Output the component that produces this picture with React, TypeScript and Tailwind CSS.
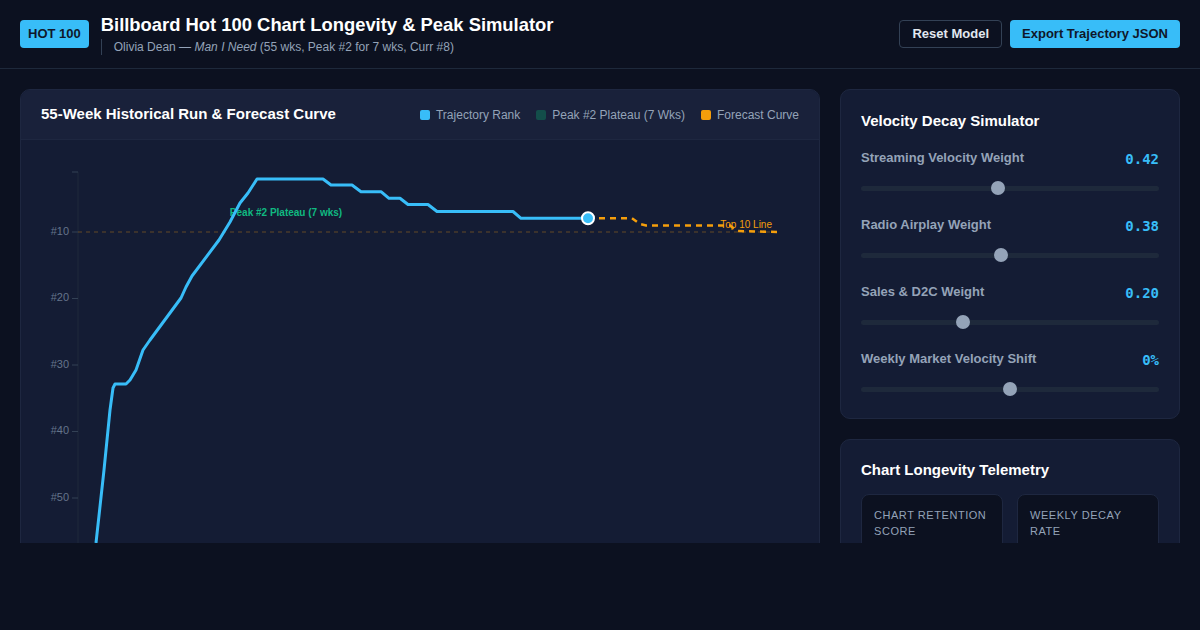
import React from "react";

const trajectory: [number, number][] = [
  [93, 560], [96, 543], [104, 470], [110, 410], [113, 388], [115, 384], [126, 384],
  [130, 380], [136, 370], [143, 350], [150, 340], [181, 298], [186, 287], [192, 276],
  [219, 240], [230, 222], [240, 203], [248, 193], [257, 179], [323, 179], [331, 185],
  [352, 185], [361, 191.7], [381, 191.7], [389, 198.3], [400, 198.3], [408, 204.5],
  [428, 204.5], [437, 211.5], [513, 211.5], [521, 218.3], [588, 218.3],
];

const forecast: [number, number][] = [
  [588, 218.3], [632, 218.3], [640, 224], [646, 225.4], [730, 225.4], [737, 231], [777, 232],
];

const ranks = [
  { label: "#10", y: 232 },
  { label: "#20", y: 298.5 },
  { label: "#30", y: 365 },
  { label: "#40", y: 431.5 },
  { label: "#50", y: 498 },
];

const sliders = [
  { label: "Streaming Velocity Weight", value: "0.42", pos: 137 },
  { label: "Radio Airplay Weight", value: "0.38", pos: 140 },
  { label: "Sales & D2C Weight", value: "0.20", pos: 102 },
  { label: "Weekly Market Velocity Shift", value: "0%", pos: 149 },
];

const pts = (p: [number, number][]) => p.map(([x, y]) => `${x},${y}`).join(" ");

const Legend = ({ color, label }: { color: string; label: string }) => (
  <div className="flex items-center gap-1.5">
    <span className={`w-2.5 h-2.5 rounded-[2px] ${color}`}></span>
    <span className="text-[12px] text-[#94a3b8]">{label}</span>
  </div>
);

const TrajectoryChart = () => {
  return (
    <svg
      width="798"
      height="420"
      viewBox="21 140 798 420"
      className="block"
      fontFamily="'Liberation Sans', Arial, sans-serif"
    >
      <line x1="78" y1="172" x2="78" y2="560" stroke="#1e293b" strokeWidth="1" />
      <line x1="72" y1="172" x2="78" y2="172" stroke="#334155" strokeWidth="1" />
      {ranks.map((r) => (
        <g key={r.label}>
          <line x1="72" y1={r.y} x2="78" y2={r.y} stroke="#334155" strokeWidth="1" />
          <text x="69" y={r.y} textAnchor="end" dominantBaseline="middle" fontSize="11" fill="#64748b">
            {r.label}
          </text>
        </g>
      ))}
      <line
        x1="78"
        y1="232"
        x2="777"
        y2="232"
        stroke="#f59e0b"
        strokeOpacity="0.35"
        strokeWidth="1"
        strokeDasharray="4 4"
      />
      <text x="772" y="225" textAnchor="end" dominantBaseline="middle" fontSize="10" fill="#f59e0b">
        Top 10 Line
      </text>
      <text
        x="286"
        y="213"
        textAnchor="middle"
        dominantBaseline="middle"
        fontSize="10"
        fontWeight="600"
        fill="#10b981"
      >
        Peak #2 Plateau (7 wks)
      </text>
      <polyline
        points={pts(trajectory)}
        fill="none"
        stroke="#38bdf8"
        strokeWidth="3"
        strokeLinejoin="round"
        strokeLinecap="round"
      />
      <polyline
        points={pts(forecast)}
        fill="none"
        stroke="#f59e0b"
        strokeWidth="2.5"
        strokeDasharray="6 5"
      />
      <circle cx="588" cy="218.3" r="6" fill="#38bdf8" stroke="#ffffff" strokeWidth="2" />
    </svg>
  );
};

const Slider = ({ label, value, pos }: { label: string; value: string; pos: number }) => (
  <div>
    <div className="flex justify-between items-center h-5">
      <span className="text-[13px] font-semibold text-[#94a3b8]">{label}</span>
      <span className="text-[14px] font-bold text-[#38bdf8] font-['DejaVu_Sans_Mono',monospace] mt-0.5">
        {value}
      </span>
    </div>
    <div className="relative h-[14px] mt-[13px]">
      <div className="absolute left-0 right-0 top-[5px] h-[5px] rounded-full bg-[#1e293b]"></div>
      <div
        className="absolute top-0 w-[14px] h-[14px] rounded-full bg-[#94a3b8]"
        style={{ left: pos - 7 }}
      ></div>
    </div>
  </div>
);

const App = () => {
  return (
    <div className="h-[630px] w-[1200px] bg-[#0c1120] font-['Liberation_Sans',Arial,sans-serif]">
      <div className="h-[543px] overflow-hidden">
        <header className="h-[69px] border-b border-[#1e293b] px-5 flex items-center justify-between">
          <div className="flex items-center gap-3">
            <div className="h-7 px-2 rounded-[4px] bg-[#38bdf8] text-[#0f172a] text-[13px] font-bold flex items-center">
              HOT 100
            </div>
            <div className="flex flex-col">
              <h1 className="text-[18.4px] font-bold text-white leading-[24px]">
                Billboard Hot 100 Chart Longevity &amp; Peak Simulator
              </h1>
              <p className="mt-[2px] border-l border-[#334155] pl-3 text-[12px] text-[#94a3b8] leading-[16px]">
                Olivia Dean — <i>Man I Need</i> (55 wks, Peak #2 for 7 wks, Curr #8)
              </p>
            </div>
          </div>
          <div className="flex items-center gap-2">
            <button className="h-7 px-3 rounded-[4px] border border-[#334155] text-[13px] font-bold text-[#e2e8f0]">
              Reset Model
            </button>
            <button className="h-7 px-3 rounded-[4px] bg-[#38bdf8] text-[13px] font-bold text-[#0f172a]">
              Export Trajectory JSON
            </button>
          </div>
        </header>

        <main className="grid grid-cols-[800px_340px] gap-5 px-5 pt-5">
          <section className="h-[560px] rounded-[10px] border border-[#1e2740] bg-[#141c34] overflow-hidden">
            <div className="h-[50px] bg-[#19213a] border-b border-[#1e2740] px-5 flex items-center justify-between">
              <h2 className="text-[15px] font-bold text-white">55-Week Historical Run &amp; Forecast Curve</h2>
              <div className="flex items-center gap-4">
                <Legend color="bg-[#38bdf8]" label="Trajectory Rank" />
                <Legend color="bg-[#134e4a]" label="Peak #2 Plateau (7 Wks)" />
                <Legend color="bg-[#f59e0b]" label="Forecast Curve" />
              </div>
            </div>
            <TrajectoryChart />
          </section>

          <div className="flex flex-col gap-5">
            <section className="rounded-[10px] border border-[#1e2740] bg-[#141c34] px-5 pt-5 pb-[22px]">
              <h3 className="text-[15px] font-bold text-white leading-[22px]">Velocity Decay Simulator</h3>
              <div className="mt-4 flex flex-col gap-5">
                {sliders.map((s) => (
                  <Slider key={s.label} label={s.label} value={s.value} pos={s.pos} />
                ))}
              </div>
            </section>

            <section className="h-[200px] rounded-[10px] border border-[#1e2740] bg-[#141c34] px-5 pt-[19px]">
              <h3 className="text-[15px] font-bold text-white leading-[22px]">Chart Longevity Telemetry</h3>
              <div className="mt-[13px] grid grid-cols-2 gap-3.5">
                <div className="h-[100px] rounded-lg border border-[#1e2740] bg-[#0c1120] p-[12px]">
                  <p className="text-[11px] uppercase tracking-[0.05em] text-[#94a3b8] leading-[16px]">
                    Chart Retention Score
                  </p>
                </div>
                <div className="h-[100px] rounded-lg border border-[#1e2740] bg-[#0c1120] p-[12px]">
                  <p className="text-[11px] uppercase tracking-[0.05em] text-[#94a3b8] leading-[16px]">
                    Weekly Decay Rate
                  </p>
                </div>
              </div>
            </section>
          </div>
        </main>
      </div>
    </div>
  );
};

export default App;
